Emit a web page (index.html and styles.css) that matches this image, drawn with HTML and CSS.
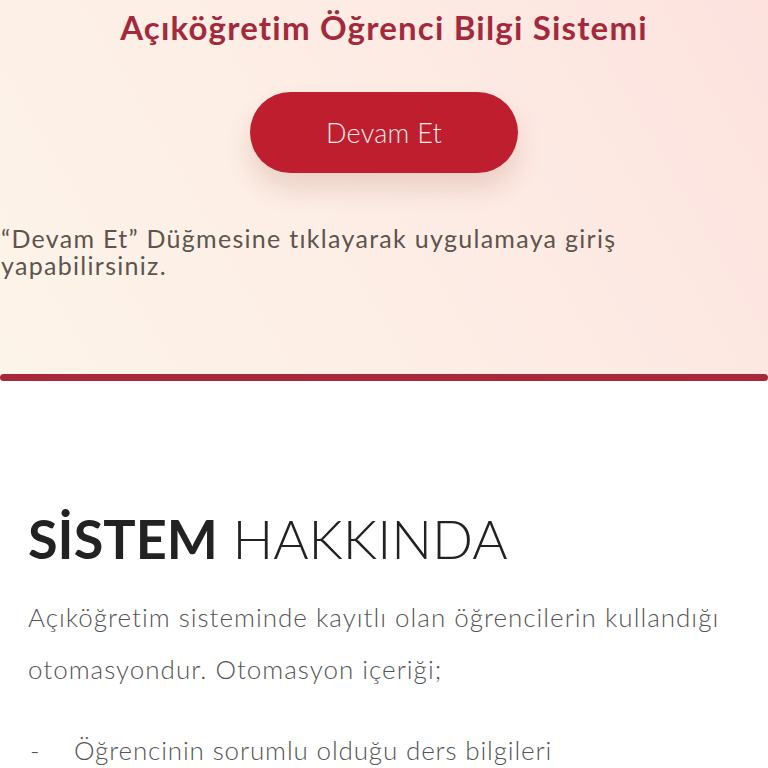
FILE: index.html
```html
<!DOCTYPE html>
<html lang="tr">
<head>
<meta charset="utf-8">
<title>Açıköğretim Öğrenci Bilgi Sistemi</title>
<link rel="stylesheet" href="styles.css">
</head>
<body>
<section class="hero">
  <h1 class="title">Açıköğretim Öğrenci Bilgi Sistemi</h1>
  <div class="cta"><button class="btn" type="button">Devam Et</button></div>
  <p class="note">“Devam Et” Düğmesine tıklayarak uygulamaya giriş yapabilirsiniz.</p>
</section>
<div class="bar"></div>
<section class="about">
  <h2 class="about-title"><span class="strong">SİSTEM</span> HAKKINDA</h2>
  <p class="about-text">Açıköğretim sisteminde kayıtlı olan öğrencilerin kullandığı otomasyondur. Otomasyon içeriği;</p>
  <ul class="list">
    <li class="item"><span class="dash">-</span><span>Öğrencinin sorumlu olduğu ders bilgileri</span></li>
  </ul>
</section>
</body>
</html>
```
FILE: styles.css
```css
html, body {
  margin: 0;
  padding: 0;
  background: #ffffff;
  overflow-x: hidden;
}
body {
  font-family: Lato, "Noto Sans", sans-serif;
}
.hero {
  height: 374px;
  box-sizing: border-box;
  padding-top: 7px;
  background: linear-gradient(240deg, #fde2de 0%, #fdebe4 40%, #fdf4e9 100%);
}
.title {
  margin: 0;
  font-weight: 700;
  font-size: 33px;
  line-height: 40px;
  letter-spacing: 1.2px;
  color: #a32a3c;
  text-align: center;
}
.cta {
  display: flex;
  justify-content: center;
  margin-top: 45px;
}
.btn {
  width: 268px;
  height: 81px;
  border: 0;
  border-radius: 41px;
  background: #be1e2d;
  color: #fbe9e9;
  font-family: Lato, "Noto Sans", sans-serif;
  font-weight: 300;
  font-size: 27px;
  letter-spacing: 0.3px;
  box-shadow: 0 16px 26px rgba(140, 60, 40, 0.16);
}
.note {
  margin: 52px 0 0;
  padding-left: 1px;
  font-size: 25px;
  line-height: 27px;
  letter-spacing: 1.3px;
  color: #5e544e;
}
.bar {
  height: 7px;
  border-radius: 4px;
  background: #a8283a;
}
.about {
  padding: 0 28px;
}
.about-title {
  margin: 125px 0 0;
  font-size: 54px;
  line-height: 66px;
  font-weight: 300;
  color: #222222;
}
.strong {
  font-weight: 700;
}
.about-text {
  margin: 19px 0 0;
  font-size: 26px;
  line-height: 52px;
  font-weight: 300;
  letter-spacing: 1px;
  color: #555555;
}
.list {
  list-style: none;
  margin: 37px 0 0;
  padding: 0;
}
.item {
  display: flex;
  font-size: 26px;
  line-height: 36px;
  font-weight: 300;
  letter-spacing: 0.85px;
  color: #555555;
}
.dash {
  width: 44px;
  padding-left: 2px;
}
```
